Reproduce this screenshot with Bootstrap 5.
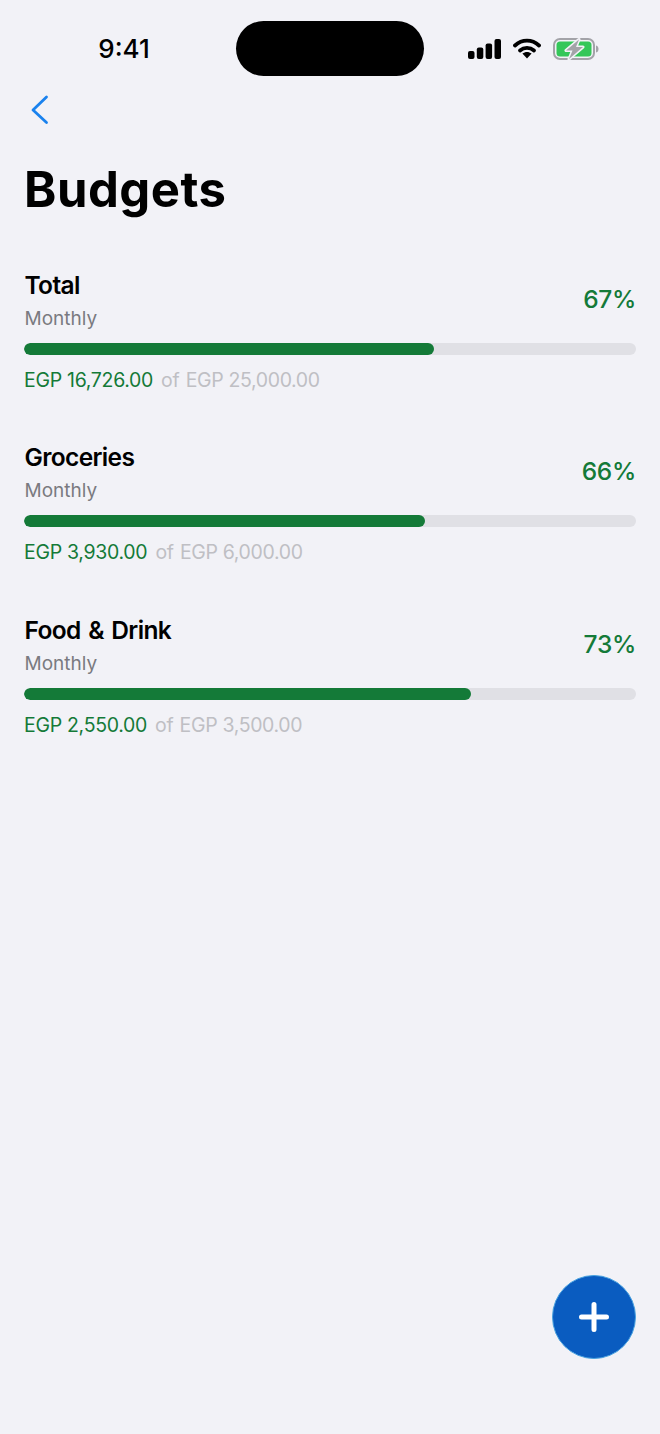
<!DOCTYPE html>
<html lang="en">

<head>
    <meta charset="UTF-8">
    <title>Budgets</title>
    <link href="https://cdn.jsdelivr.net/npm/bootstrap@5.3.0/dist/css/bootstrap.min.css" rel="stylesheet">
    <style>
        body {
            background-color: #f2f2f7;
            font-family: Inter, "Liberation Sans", sans-serif;
            color: #000;
        }

        .screen {
            position: relative;
            width: 660px;
            height: 1434px;
            overflow: hidden;
        }

        .status-bar {
            height: 76px;
            padding-top: 21px;
        }

        .status-time {
            width: 236px;
            text-align: center;
            font-size: 26px;
            font-weight: 550;
            line-height: 55px;
            padding-left: 12px;
        }

        .island {
            width: 188px;
            height: 55px;
            background: #000;
            border-radius: 28px;
        }

        .status-icons {
            padding-left: 44px;
            gap: 12px;
        }

        .back-link {
            display: block;
            margin: 19px 0 0 30px;
            width: 20px;
            height: 30px;
            line-height: 0;
        }

        .page-title {
            margin: 36px 0 0 24px;
            font-size: 49px;
            line-height: 58px;
            font-weight: 700;
            letter-spacing: .5px;
        }

        .budget-list {
            margin: 49.6px 24px 0;
        }

        .budget-row {
            height: 172.5px;
        }

        .budget-name {
            font-size: 24.5px;
            line-height: 32px;
            font-weight: 600;
            letter-spacing: -.65px;
            word-spacing: 2px;
            padding-left: .5px;
        }

        .budget-period {
            font-size: 19px;
            line-height: 26px;
            margin-top: 5px;
            color: #7a7a80;
            padding-left: .5px;
        }

        .budget-pct {
            font-size: 24.5px;
            line-height: 32px;
            font-weight: 550;
            color: #147a38;
            margin-top: 14px;
            letter-spacing: -.3px;
        }

        .budget-track {
            height: 12px;
            margin-top: 11px;
            background-color: #e0e0e5;
            border-radius: 6px;
        }

        .budget-fill {
            background-color: #147a38;
            border-radius: 6px;
        }

        .budget-amounts {
            font-size: 19.5px;
            line-height: 26px;
            margin-top: 12px;
            color: #bfbfc4;
            gap: 6px;
            letter-spacing: -.2px;
        }

        .budget-total {
            letter-spacing: -.35px;
        }

        .budget-spent {
            color: #147a38;
            letter-spacing: -.3px;
            margin-right: 2px;
        }

        .add-btn {
            position: absolute;
            left: 552px;
            top: 1275px;
            width: 84px;
            height: 84px;
            padding: 0;
            border: 1px solid #4aa3e0;
            border-radius: 50%;
            background-color: #0a5cc0;
        }
    </style>
</head>

<body>
    <div class="screen">
        <div class="status-bar d-flex">
            <div class="status-time">9:41</div>
            <div class="island"></div>
            <div class="status-icons d-flex align-items-center">
                <svg width="33" height="20" viewBox="0 0 33 20">
                    <rect x="0" y="12" width="6.500" height="8" rx="2" fill="#000"/>
                    <rect x="8.800" y="8.500" width="6.500" height="11.500" rx="2" fill="#000"/>
                    <rect x="17.600" y="4.500" width="6.500" height="15.500" rx="2" fill="#000"/>
                    <rect x="26.500" y="0" width="6.500" height="20" rx="2" fill="#000"/>
                </svg>
                <svg width="28" height="21" viewBox="0 0 28 21">
                    <path d="M2 7.500C9 1 19 1 26 7.500" fill="none" stroke="#000" stroke-width="3.800" stroke-linecap="round"/>
                    <path d="M7 12.500C11 9 17 9 21 12.500" fill="none" stroke="#000" stroke-width="3.800" stroke-linecap="round"/>
                    <path d="M9.400 15.600C12.200 13.300 15.800 13.300 18.600 15.600L14 20.500Z" fill="#000"/>
                </svg>
                <svg width="46" height="22" viewBox="0 0 46 22">
                    <rect x="1" y="1" width="40" height="20" rx="6" fill="none" stroke="#a3a3a8" stroke-width="2"/>
                    <path d="M43 7.500C45 8 45.500 9.500 45.500 11S45 14 43 14.500Z" fill="#a3a3a8"/>
                    <rect x="3.500" y="3.500" width="35" height="15" rx="3.500" fill="#34c759"/>
                    <path d="M26 1.500L13 12.500H19.500L16 21L30 9H23Z" fill="#a3a3a8" stroke="#f2f2f7" stroke-width="3" stroke-linejoin="round" paint-order="stroke"/>
                </svg>
            </div>
        </div>

        <a class="back-link" href="#">
            <svg width="20" height="30" viewBox="0 0 20 30">
                <path d="M16.500 2L3 15L16.500 27.500" fill="none" stroke="#1a82ee" stroke-width="2.800" stroke-linecap="round" stroke-linejoin="round"/>
            </svg>
        </a>

        <h1 class="page-title">Budgets</h1>

        <div class="budget-list">
            <div class="budget-row">
                <div class="d-flex justify-content-between">
                    <div>
                        <div class="budget-name">Total</div>
                        <div class="budget-period">Monthly</div>
                    </div>
                    <div class="budget-pct">67%</div>
                </div>
                <div class="budget-track progress">
                    <div class="budget-fill progress-bar" style="width: 67%"></div>
                </div>
                <div class="budget-amounts d-flex">
                    <span class="budget-spent">EGP 16,726.00</span><span>of</span><span class="budget-total">EGP 25,000.00</span>
                </div>
            </div>

            <div class="budget-row">
                <div class="d-flex justify-content-between">
                    <div>
                        <div class="budget-name">Groceries</div>
                        <div class="budget-period">Monthly</div>
                    </div>
                    <div class="budget-pct">66%</div>
                </div>
                <div class="budget-track progress">
                    <div class="budget-fill progress-bar" style="width: 65.6%"></div>
                </div>
                <div class="budget-amounts d-flex">
                    <span class="budget-spent">EGP 3,930.00</span><span>of</span><span class="budget-total">EGP 6,000.00</span>
                </div>
            </div>

            <div class="budget-row">
                <div class="d-flex justify-content-between">
                    <div>
                        <div class="budget-name">Food &amp; Drink</div>
                        <div class="budget-period">Monthly</div>
                    </div>
                    <div class="budget-pct">73%</div>
                </div>
                <div class="budget-track progress">
                    <div class="budget-fill progress-bar" style="width: 73%"></div>
                </div>
                <div class="budget-amounts d-flex">
                    <span class="budget-spent">EGP 2,550.00</span><span>of</span><span class="budget-total">EGP 3,500.00</span>
                </div>
            </div>
        </div>

        <button type="button" class="add-btn btn d-flex align-items-center justify-content-center">
            <svg width="32" height="32" viewBox="0 0 32 32">
                <path d="M16 3.500V28.500M3.500 16H28.500" fill="none" stroke="#fff" stroke-width="5" stroke-linecap="round"/>
            </svg>
        </button>
    </div>

    <script src="https://cdn.jsdelivr.net/npm/bootstrap@5.3.0/dist/js/bootstrap.bundle.min.js"></script>
</body>

</html>
